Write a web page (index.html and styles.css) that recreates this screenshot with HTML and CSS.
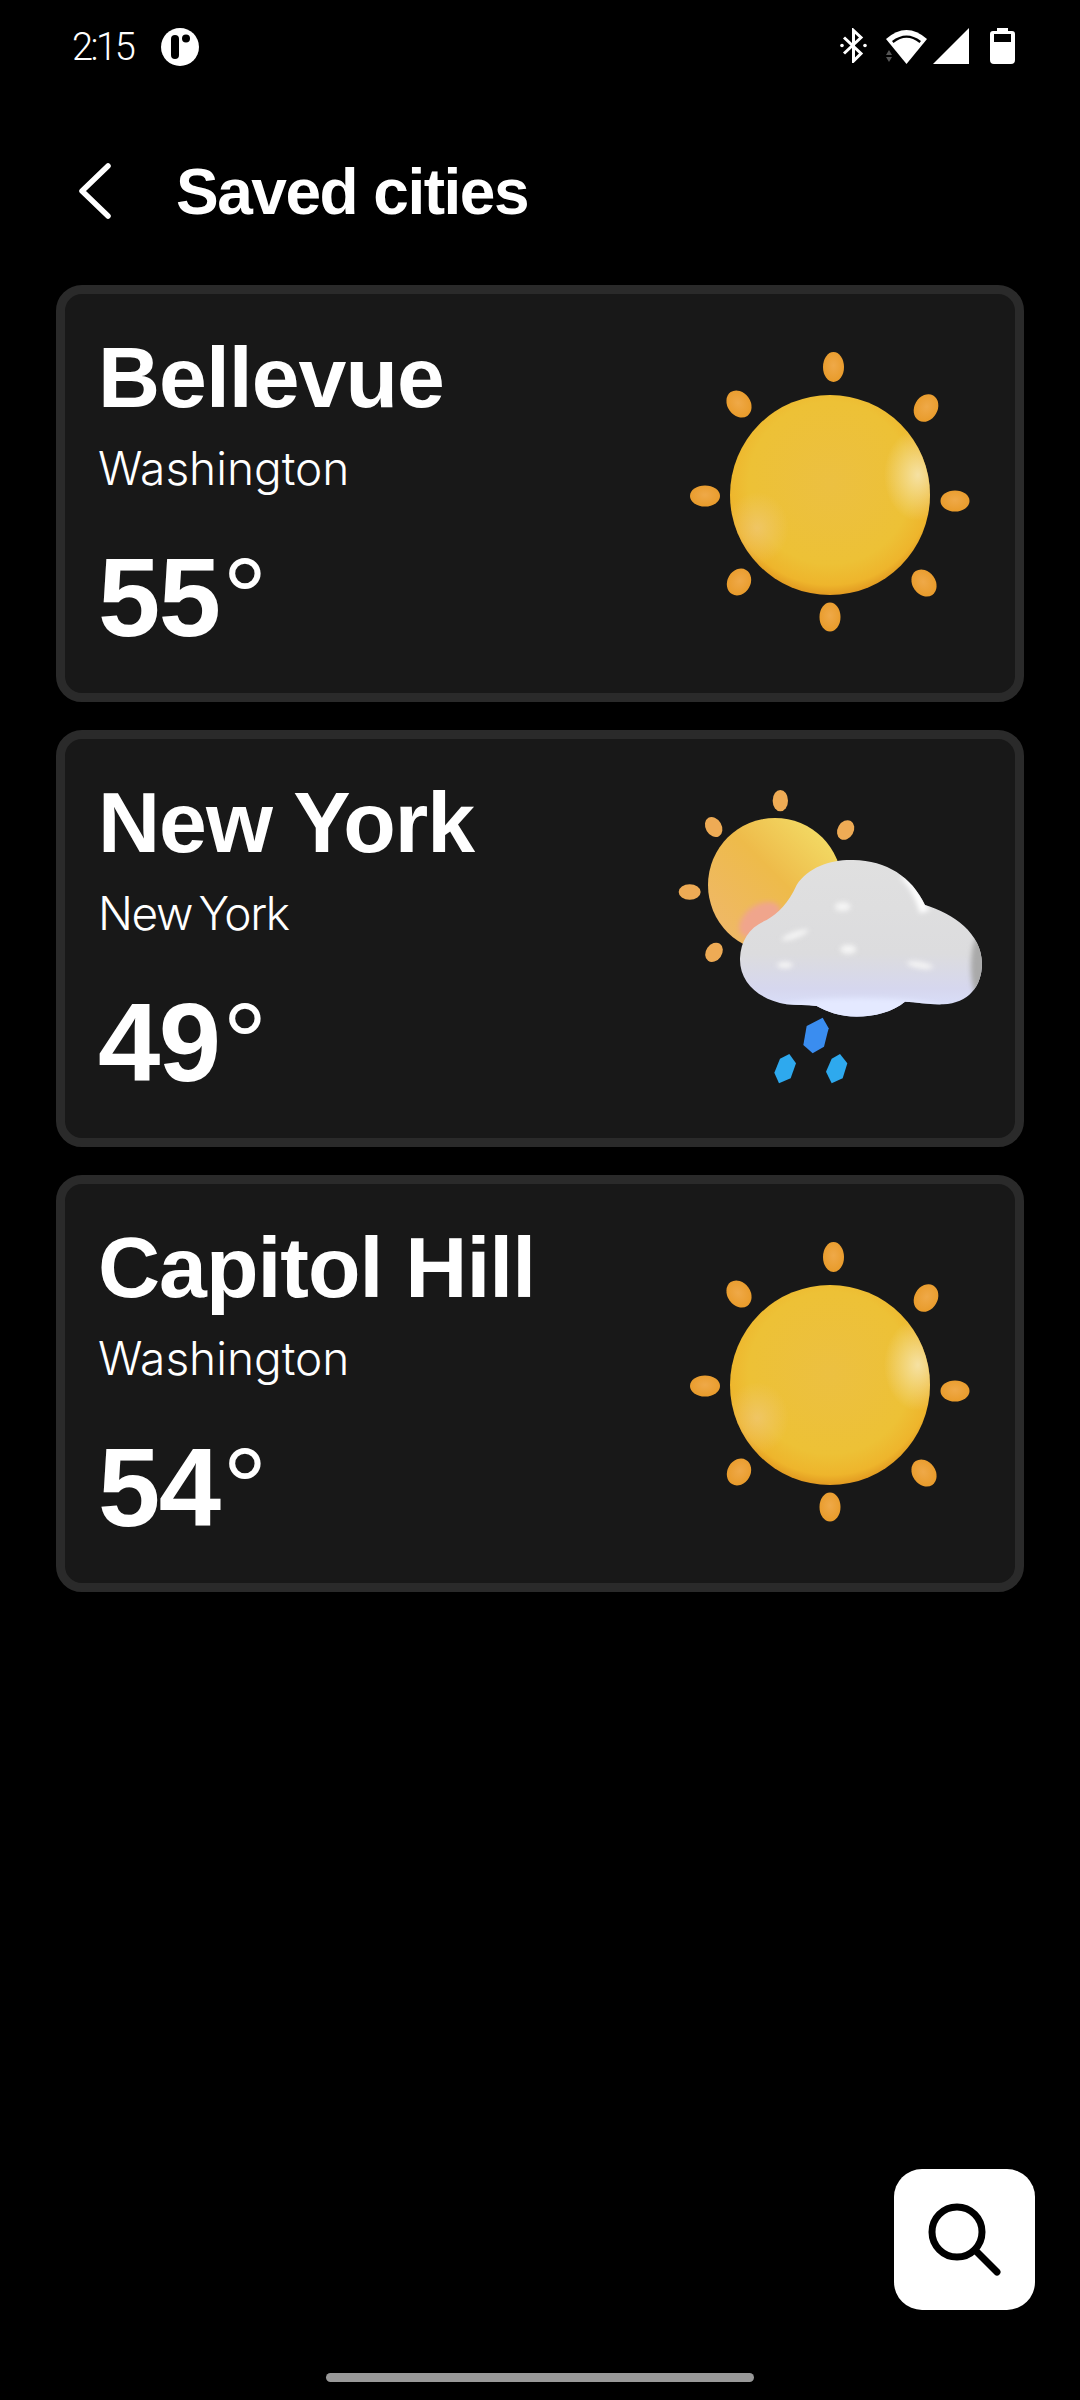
FILE: index.html
```html
<!DOCTYPE html>
<html lang="en">
<head>
    <meta charset="UTF-8">
    <meta name="viewport" content="width=device-width, initial-scale=1.0">
    <title>Saved cities</title>
    <link rel="stylesheet" href="styles.css">
</head>
<body>
    <svg class="defs" width="0" height="0">
        <defs>
            <radialGradient id="sunBody" cx="0.5" cy="0.44" r="0.58">
                <stop offset="0" stop-color="#ecc041"/>
                <stop offset="0.7" stop-color="#edc136"/>
                <stop offset="0.88" stop-color="#eeb52c"/>
                <stop offset="1" stop-color="#dd8f1c"/>
            </radialGradient>
            <radialGradient id="sunGlow">
                <stop offset="0" stop-color="#f6e3a8" stop-opacity="0.95"/>
                <stop offset="1" stop-color="#f6e3a8" stop-opacity="0"/>
            </radialGradient>
            <radialGradient id="sunGlowLow">
                <stop offset="0" stop-color="#f0c878" stop-opacity="0.7"/>
                <stop offset="1" stop-color="#f0c878" stop-opacity="0"/>
            </radialGradient>
            <radialGradient id="ray" cx="0.5" cy="0.45" r="0.6">
                <stop offset="0" stop-color="#efa948"/>
                <stop offset="1" stop-color="#e89a28"/>
            </radialGradient>
            <linearGradient id="smallSun" x1="0.9" y1="0.1" x2="0.1" y2="0.9">
                <stop offset="0" stop-color="#f3dc66"/>
                <stop offset="0.45" stop-color="#eebb4a"/>
                <stop offset="1" stop-color="#efb869"/>
            </linearGradient>
            <linearGradient id="cloudBody" x1="0" y1="0" x2="0" y2="1">
                <stop offset="0" stop-color="#e0e0e0"/>
                <stop offset="0.6" stop-color="#dcdcde"/>
                <stop offset="0.82" stop-color="#d6d7ee"/>
                <stop offset="1" stop-color="#dbe2ff"/>
            </linearGradient>
            <filter id="soft" x="-50%" y="-50%" width="200%" height="200%">
                <feGaussianBlur stdDeviation="8"/>
            </filter>
            <clipPath id="sunClip">
                <circle cx="170" cy="170" r="100"/>
            </clipPath>
            <clipPath id="smallSunClip">
                <circle cx="345" cy="345" r="201"/>
            </clipPath>
            <clipPath id="cloudClip">
                <path d="M240 565 C242 510 270 470 320 450 C355 430 385 400 410 345 C445 290 515 268 580 270 C680 272 755 320 795 405 C880 430 965 490 966 580 C966 650 925 700 850 703 C810 705 770 695 735 695 C700 725 640 740 590 740 C540 740 500 725 470 708 C440 705 410 705 380 703 C300 690 238 640 240 565 Z"/>
            </clipPath>
            <symbol id="sun" viewBox="0 0 340 330">
                <circle cx="170" cy="170" r="100" fill="url(#sunBody)"/>
                <g clip-path="url(#sunClip)">
                    <ellipse cx="258" cy="150" rx="34" ry="46" fill="url(#sunGlow)"/>
                    <ellipse cx="97" cy="203" rx="32" ry="36" fill="url(#sunGlowLow)"/>
                </g>
                <g fill="url(#ray)">
                    <ellipse cx="173.500" cy="42" rx="10.500" ry="15"/>
                    <ellipse cx="266" cy="83" rx="11.500" ry="14.500" transform="rotate(30 266 83)"/>
                    <ellipse cx="295" cy="176" rx="14.500" ry="10.500"/>
                    <ellipse cx="264" cy="258" rx="11.500" ry="14.500" transform="rotate(-35 264 258)"/>
                    <ellipse cx="170" cy="292" rx="10.500" ry="14.500"/>
                    <ellipse cx="79" cy="257" rx="11.500" ry="14" transform="rotate(30 79 257)"/>
                    <ellipse cx="45" cy="171" rx="15" ry="10.500"/>
                    <ellipse cx="79" cy="79" rx="11.500" ry="14.500" transform="rotate(-35 79 79)"/>
                </g>
            </symbol>
        </defs>
    </svg>

    <div class="page">
        <div class="status-bar">
            <div class="status-left">
                <span class="time">2:15</span>
                <svg class="status-logo" viewBox="0 0 38 38">
                    <circle cx="19" cy="19" r="19" fill="#fff"/>
                    <rect x="10" y="7" width="8" height="24" rx="4" fill="#000"/>
                    <circle cx="25" cy="10.500" r="4" fill="#000"/>
                </svg>
            </div>
            <div class="status-right">
                <svg class="icon-bt" viewBox="0 0 27 35" fill="none" stroke="#fff" stroke-width="3">
                    <path d="M4 9.500 L21 25.500 L13.500 33 V2.500 L21 9.500 L4 25.500"/>
                    <circle cx="2" cy="17.500" r="1.800" fill="#fff" stroke="none"/>
                    <circle cx="25" cy="17.500" r="1.800" fill="#fff" stroke="none"/>
                </svg>
                <svg class="icon-wifi" viewBox="0 0 41 35">
                    <path d="M20.500 35 L0 10 Q20.500 -8 41 10 Z" fill="#fff"/>
                    <path d="M6 12 Q20.500 1 35 12 L33.500 14 Q20.500 3.500 7.500 14 Z" fill="#000"/>
                    <path d="M3 21 L6 26 H0 Z M0 28 H6 L3 33 Z" fill="#555"/>
                </svg>
                <svg class="icon-signal" viewBox="0 0 36 36">
                    <path d="M36 0 V36 H0 Z" fill="#fff"/>
                </svg>
                <svg class="icon-battery" viewBox="0 0 25 36">
                    <path d="M7 0 H18 V3 H22 Q25 3 25 6 V32 Q25 36 21 36 H4 Q0 36 0 32 V6 Q0 3 3 3 H7 Z" fill="#fff"/>
                    <rect x="4" y="6" width="17" height="8" fill="#000"/>
                </svg>
            </div>
        </div>

        <div class="top-bar">
            <svg class="back" viewBox="0 0 34 56" fill="none" stroke="#fff" stroke-width="5.500" stroke-linecap="round" stroke-linejoin="round">
                <path d="M30 3 L4 28 L30 53"/>
            </svg>
            <h1>Saved cities</h1>
        </div>

        <div class="cities">
            <div class="card">
                <div class="info">
                    <div class="city">Bellevue</div>
                    <div class="region">Washington</div>
                    <div class="temp">55<span class="deg">°</span></div>
                </div>
                <svg class="weather"><use href="#sun"/></svg>
            </div>

            <div class="card">
                <div class="info">
                    <div class="city">New York</div>
                    <div class="region region-tight">New York</div>
                    <div class="temp">49<span class="deg">°</span></div>
                </div>
                <svg class="weather" viewBox="0 0 1020 990">
                    <circle cx="345" cy="345" r="201" fill="url(#smallSun)"/>
                    <g clip-path="url(#smallSunClip)">
                        <ellipse cx="300" cy="450" rx="70" ry="45" fill="#f0a58c" filter="url(#soft)" transform="rotate(-35 300 450)"/>
                    </g>
                    <g fill="#eeab55">
                        <ellipse cx="361" cy="92" rx="23" ry="32"/>
                        <ellipse cx="557" cy="180" rx="24" ry="31" transform="rotate(30 557 180)"/>
                        <ellipse cx="161" cy="171" rx="24" ry="32" transform="rotate(-30 161 171)"/>
                        <ellipse cx="89" cy="366" rx="33" ry="23"/>
                        <ellipse cx="162" cy="547" rx="24" ry="31" transform="rotate(35 162 547)"/>
                    </g>
                    <path d="M240 565 C242 510 270 470 320 450 C355 430 385 400 410 345 C445 290 515 268 580 270 C680 272 755 320 795 405 C880 430 965 490 966 580 C966 650 925 700 850 703 C810 705 770 695 735 695 C700 725 640 740 590 740 C540 740 500 725 470 708 C440 705 410 705 380 703 C300 690 238 640 240 565 Z" fill="url(#cloudBody)"/>
                    <g clip-path="url(#cloudClip)">
                        <path d="M740 320 C790 370 800 410 810 420 L780 430 C770 390 750 350 720 320 Z" fill="#fff" filter="url(#soft)"/>
                        <ellipse cx="955" cy="590" rx="22" ry="90" fill="#a9a9a9" filter="url(#soft)"/>
                        <ellipse cx="600" cy="715" rx="250" ry="30" fill="#e4e9ff" filter="url(#soft)"/>
                        <g fill="#f4f4f4" filter="url(#soft)">
                            <ellipse cx="405" cy="495" rx="42" ry="10" transform="rotate(-20 405 495)"/>
                            <ellipse cx="548" cy="410" rx="24" ry="14"/>
                            <ellipse cx="565" cy="538" rx="24" ry="14"/>
                            <ellipse cx="375" cy="585" rx="24" ry="10"/>
                            <ellipse cx="780" cy="585" rx="40" ry="10" transform="rotate(10 780 585)"/>
                        </g>
                    </g>
                    <polygon points="488,743 506,775 492,830 458,850 430,825 440,768" fill="#3a8df0"/>
                    <polygon points="388,852 408,880 392,925 357,940 343,908 360,866" fill="#2ea9ee"/>
                    <polygon points="540,852 562,880 548,925 515,940 498,905 515,866" fill="#2ea9ee"/>
                </svg>
            </div>

            <div class="card">
                <div class="info">
                    <div class="city">Capitol Hill</div>
                    <div class="region">Washington</div>
                    <div class="temp">54<span class="deg">°</span></div>
                </div>
                <svg class="weather"><use href="#sun"/></svg>
            </div>
        </div>

        <div class="home-bar"><span class="home-pill"></span></div>

        <button class="search-btn">
            <svg viewBox="0 0 141 141" fill="none" stroke="#000" stroke-width="7" stroke-linecap="round">
                <circle cx="63" cy="63" r="25"/>
                <path d="M81 81 L103 103"/>
            </svg>
        </button>
    </div>
</body>
</html>
```

FILE: styles.css
```css
* {
    box-sizing: border-box;
}

body {
    margin: 0;
    background: #000;
    color: #fff;
    font-family: "Liberation Sans", Arial, sans-serif;
}

.defs {
    display: block;
    height: 0;
}

.page {
    position: relative;
    width: 1080px;
    height: 2400px;
    display: flex;
    flex-direction: column;
    overflow: hidden;
}

.status-bar {
    height: 140px;
    padding: 28px 65px 0 72px;
    display: flex;
    justify-content: space-between;
    align-items: flex-start;
}

.status-left {
    display: flex;
    align-items: center;
    gap: 28px;
    height: 38px;
}

.time {
    font-family: Roboto, sans-serif;
    font-weight: 300;
    font-size: 38px;
    letter-spacing: -2.500px;
    line-height: 38px;
}

.status-logo {
    width: 38px;
    height: 38px;
}

.status-right {
    display: flex;
    align-items: flex-start;
}

.icon-bt {
    width: 27px;
    height: 35px;
    margin-right: 19px;
}

.icon-wifi {
    width: 41px;
    height: 35px;
    margin-top: 1px;
    margin-right: 6px;
}

.icon-signal {
    width: 36px;
    height: 36px;
    margin-right: 21px;
}

.icon-battery {
    width: 25px;
    height: 36px;
}

.top-bar {
    height: 101px;
    padding: 0 0 0 78px;
    display: flex;
    align-items: center;
    gap: 64px;
}

.back {
    width: 34px;
    height: 56px;
}

h1 {
    margin: 2px 0 0;
    font-size: 64px;
    font-weight: 700;
    letter-spacing: -1.500px;
    line-height: 70px;
}

.cities {
    margin-top: 44px;
    padding: 0 56px;
    display: flex;
    flex-direction: column;
    gap: 28px;
}

.card {
    height: 417px;
    background: #181818;
    border: 9px solid #2a2a2a;
    border-radius: 26px;
    padding: 0 15px 0 33px;
    display: flex;
    justify-content: space-between;
    align-items: flex-start;
}

.info {
    display: flex;
    flex-direction: column;
}

.city {
    margin-top: 33px;
    font-size: 86px;
    font-weight: 700;
    letter-spacing: -1px;
    line-height: 100px;
}

.region {
    margin-top: 13px;
    font-family: Inter, sans-serif;
    font-weight: 300;
    font-size: 46px;
    line-height: 56px;
}

.region-tight {
    letter-spacing: -1.400px;
    word-spacing: -5px;
}

.temp {
    margin-top: 37px;
    font-size: 112px;
    font-weight: 700;
    letter-spacing: -1.500px;
    line-height: 130px;
}

.deg {
    margin-left: 3px;
    font-weight: 400;
}

.weather {
    width: 340px;
    height: 330px;
    margin-top: 31px;
    flex-shrink: 0;
}

.home-bar {
    margin-top: auto;
    height: 27px;
    display: flex;
    justify-content: center;
}

.home-pill {
    width: 428px;
    height: 9px;
    border-radius: 5px;
    background: #999;
}

.search-btn {
    position: absolute;
    left: 894px;
    top: 2169px;
    width: 141px;
    height: 141px;
    padding: 0;
    border: none;
    border-radius: 28px;
    background: #fff;
}

.search-btn svg {
    display: block;
    width: 141px;
    height: 141px;
}
```
